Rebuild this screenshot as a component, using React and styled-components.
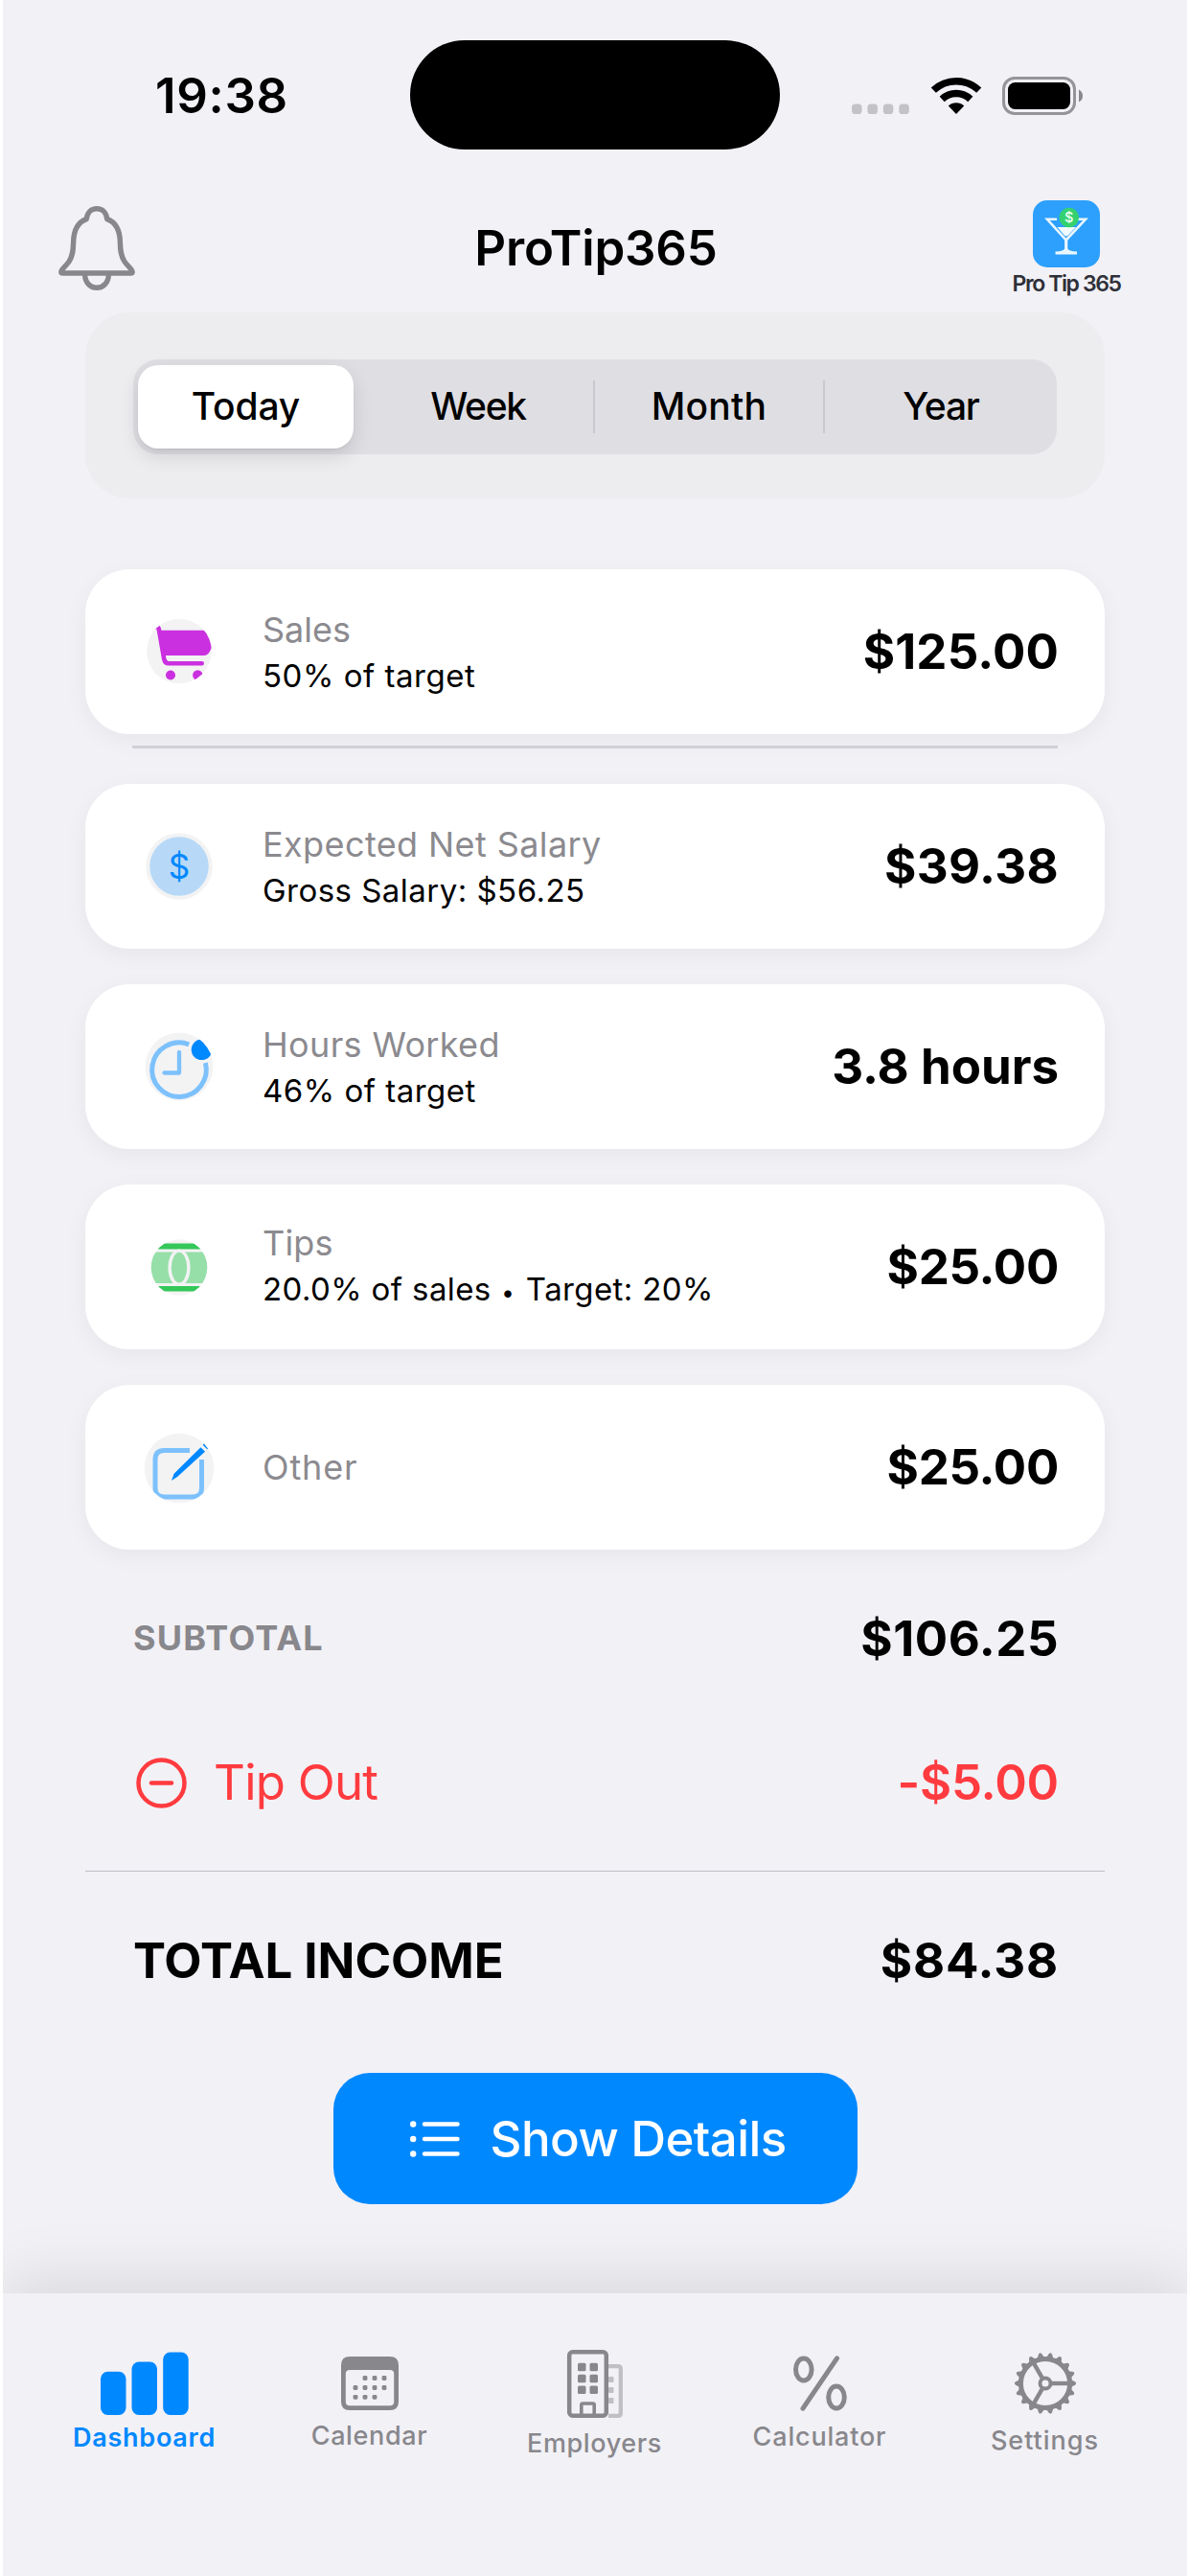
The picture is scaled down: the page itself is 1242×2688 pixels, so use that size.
import React from 'react';
import styled, { createGlobalStyle } from 'styled-components';

const BLUE = '#0088ff';
const GREY = '#88878c';

const GlobalStyle = createGlobalStyle`
  * { box-sizing: border-box; }
  body {
    margin: 0;
    background: #ffffff;
    font-family: Inter, "Liberation Sans", sans-serif;
    color: #000000;
  }
  svg { display: block; flex: none; overflow: visible; }
`;

const Screen = styled.div`
  width: 1236px;
  height: 2688px;
  margin: 0 3px;
  background: #f2f1f6;
  display: flex;
  flex-direction: column;
  overflow: hidden;
`;

const Text = styled.span`
  font-size: ${(p) => p.$size || 51}px;
  font-weight: ${(p) => p.$weight || 400};
  line-height: ${(p) => (p.$line ? `${p.$line}px` : '1.2')};
  letter-spacing: ${(p) => p.$track || 0}px;
  color: ${(p) => p.$color || '#000000'};
  white-space: nowrap;
`;

/* ---------- Status bar ---------- */

const StatusBar = styled.div`
  height: 200px;
  display: grid;
  grid-template-columns: 425px 386px 1fr;
  align-items: center;
`;

const Clock = styled(Text)`
  padding-left: 159px;
`;

const Island = styled.div`
  height: 114px;
  margin-bottom: 2px;
  border-radius: 57px;
  background: #000000;
`;

const StatusIcons = styled.div`
  display: flex;
  align-items: center;
  gap: 22.5px;
  padding-left: 75px;
`;

/* ---------- Header ---------- */

const Header = styled.header`
  height: 117px;
  padding: 0 69px 0 58px;
  display: grid;
  grid-template-columns: 1fr auto 1fr;
  align-items: center;
`;

const Title = styled(Text)`
  margin: 0;
  padding-left: 13px;
`;

const Brand = styled.div`
  justify-self: end;
  width: 114px;
  display: flex;
  flex-direction: column;
  align-items: center;
  gap: 5px;
`;

/* ---------- Period picker ---------- */

const PickerPanel = styled.div`
  margin: 9px 86px 0;
  padding: 49px 50px 46px;
  border-radius: 46px;
  background: #ededef;
`;

const Picker = styled.div`
  height: 99px;
  border-radius: 26px;
  background: #dfdee3;
  display: grid;
  grid-template-columns: 240px 240px 240px 1fr;
  align-items: center;
`;

const Segment = styled.div`
  height: ${(p) => (p.$active ? 87 : 55)}px;
  margin: ${(p) => (p.$active ? '0 10px 0 5px' : '0')};
  display: flex;
  align-items: center;
  justify-content: center;
  border-radius: ${(p) => (p.$active ? 21 : 0)}px;
  background: ${(p) => (p.$active ? '#ffffff' : 'transparent')};
  box-shadow: ${(p) =>
    p.$active ? '0 8px 20px rgba(0,0,0,0.12), 0 2px 2px rgba(0,0,0,0.04)' : 'none'};
  border-left: ${(p) => (p.$divided ? '2px solid #c9c8ce' : 'none')};
`;

/* ---------- Cards ---------- */

const Cards = styled.section`
  margin: 74px 86px 0;
  display: flex;
  flex-direction: column;
  gap: 37px;
`;

const CardGroup = styled.div`
  display: flex;
  flex-direction: column;
  gap: 12px;
`;

const Card = styled.article`
  height: 172px;
  padding: 0 48px 0 62px;
  border-radius: 46px;
  background: #ffffff;
  box-shadow: 0 6px 24px rgba(0, 0, 0, 0.05);
  display: flex;
  align-items: center;
`;

const CardBody = styled.div`
  flex: 1;
  margin-left: 51px;
  display: flex;
  flex-direction: column;
`;

const Bullet = styled.span`
  margin: 0 2px 0 1px;
  font-size: 24px;
`;

const CardRule = styled.div`
  height: 3px;
  margin: 0 49px;
  background: #d1d0d6;
`;

/* ---------- Totals ---------- */

const Totals = styled.section`
  margin: 43px 86px 0;
  display: flex;
  flex-direction: column;
`;

const TotalRow = styled.div`
  height: 100px;
  padding: 0 48px 0 50px;
  margin-top: ${(p) => p.$top || 0}px;
  display: flex;
  align-items: center;
  justify-content: space-between;
`;

const TipLabel = styled.div`
  display: flex;
  align-items: center;
  gap: 28px;
  padding-left: 3px;
`;

const Rule = styled.div`
  height: 1px;
  margin-top: 42px;
  background: #bfbec4;
`;

const DetailsButton = styled.button`
  align-self: center;
  width: 547px;
  height: 137px;
  margin-top: 67px;
  padding: 0 0 0 80px;
  border: 0;
  border-radius: 38px;
  background: ${BLUE};
  font-family: inherit;
  display: flex;
  align-items: center;
  gap: 32px;
`;

/* ---------- Tab bar ---------- */

const TabBar = styled.nav`
  height: 295px;
  margin-top: auto;
  padding: 0 30px;
  background: #f2f1f6;
  box-shadow: 0 -15px 60px rgba(0, 0, 0, 0.1);
  display: grid;
  grid-template-columns: repeat(5, 235px);
`;

const Tab = styled.div`
  display: flex;
  flex-direction: column;
  align-items: center;
  gap: 10px;
  padding-top: ${(p) => 94 - p.$iconHeight / 2}px;
`;

/* ---------- Icons ---------- */

const SignalDots = () => (
  <svg width="60" height="40" fill="#c3c2c7">
    {[0, 16.4, 32.8, 49.3].map((x) => (
      <rect key={x} x={x} y="28.5" width="10.5" height="10.5" rx="3.6" />
    ))}
  </svg>
);

const Wifi = () => (
  <svg width="52" height="38" viewBox="0 0 52 38" fill="none" stroke="#000" strokeWidth="7.4">
    <path d="M2.3 13.2A34.3 34.3 0 0 1 49.7 13.2" />
    <path d="M11.2 22.5A21.4 21.4 0 0 1 40.8 22.5" />
    <path d="M26 38L17.8 29.6A12 12 0 0 1 34.2 29.6Z" fill="#000" stroke="none" />
  </svg>
);

const Battery = () => (
  <svg width="85" height="40" viewBox="0 0 85 40">
    <rect x="1.5" y="1.5" width="74" height="37" rx="11.5" fill="none" stroke="#959499" strokeWidth="3" />
    <rect x="6" y="6" width="65" height="28" rx="7.5" fill="#000" />
    <path d="M80 13.5Q84 15.5 84 20T80 26.5Z" fill="#88878c" />
  </svg>
);

const Bell = () => (
  <svg width="80" height="88" viewBox="0 0 80 88" fill="none" stroke={GREY} strokeWidth="5.4" strokeLinejoin="round">
    <path d="M29.3 13.6C30 6.6 34 2.8 40 2.8S50 6.6 50.7 13.6C60.5 17 64.2 27 64.4 38C64.6 46 65 52 69 58C72.5 63 77.2 66 77.2 69Q77.2 70 75.5 70H4.5Q2.8 70 2.8 69C2.8 66 7.5 63 11 58C15 52 15.4 46 15.6 38C15.8 27 19.5 17 29.3 13.6Z" />
    <path d="M27.6 71C27.6 79.5 33 85.3 40 85.3S52.4 79.5 52.4 71" />
  </svg>
);

const BrandMark = () => (
  <svg width="70" height="70" viewBox="0 0 70 70">
    <rect width="70" height="70" rx="15" fill="#2ca0fc" />
    <g fill="none" stroke="#eaf6ff" strokeWidth="2.6">
      <path d="M25 19.8H15L34.7 41.5L55 19.8H46" />
      <path d="M34.7 41V53" strokeWidth="3.2" />
    </g>
    <path d="M33 50.5H36.5Q37 53 46 53.6V56.6H23.5V53.6Q32.5 53 33 50.5Z" fill="#eaf6ff" />
    <path d="M25.5 28H45L36.5 36.8Q34.8 38 33.1 36.8Z" fill="#f2faff" />
    <circle cx="37.8" cy="18" r="10.3" fill="#34d170" />
    <text x="37.8" y="23.2" textAnchor="middle" fontSize="14.5" fontWeight="500" fill="#f0fff5">$</text>
  </svg>
);

const Disc = ({ r, cy = 36, id, children }) => (
  <svg width="72" height="72" viewBox="0 0 72 72">
    <clipPath id={id}>
      <circle cx="36" cy={cy} r={r} />
    </clipPath>
    <circle cx="36" cy={cy} r={r} fill="#f3f3f4" />
    <g clipPath={`url(#${id})`}>{children}</g>
  </svg>
);

const CartIcon = () => (
  <Disc id="disc-cart" r={33.8} cy={35.5}>
    <g fill="#cb30e0">
      <path d="M16 13.8H80L67.5 36.5Q65.5 39.9 62 39.9H20Z" />
      <circle cx="27" cy="60.5" r="5" />
      <circle cx="55.3" cy="60.5" r="5.2" />
    </g>
    <path d="M10 10.3H12.5Q14.4 10.3 14.8 12.5L20.2 43.5Q21 48.3 25 48.3H59.7" fill="none" stroke="#cb30e0" strokeWidth="4.6" strokeLinecap="round" />
  </Disc>
);

const SalaryIcon = () => (
  <Disc id="disc-salary" r={34.8}>
    <circle cx="36" cy="36" r="30.8" fill="#b7d9f7" />
    <text x="36" y="48.7" textAnchor="middle" fontSize="35" fontWeight="400" fill={BLUE}>$</text>
  </Disc>
);

const HoursIcon = () => (
  <Disc id="disc-hours" r={35.5}>
    <g fill="none" stroke="#7dc1fc" strokeWidth="5">
      <path d="M46.2 12.8A28.3 28.3 0 1 0 63.4 32.2" />
      <path d="M36 21V42.5H20.5" strokeWidth="4.3" strokeLinecap="round" strokeLinejoin="round" />
    </g>
    <circle cx="59.5" cy="18.3" r="10.8" fill={BLUE} />
  </Disc>
);

const TipsIcon = () => (
  <Disc id="disc-tips" r={29.3} cy={36.5}>
    <rect x="0" y="11.5" width="72" height="6" fill="#34c759" />
    <rect x="0" y="56" width="72" height="5.5" fill="#34c759" />
    <rect x="0" y="20.5" width="72" height="32.5" fill="#96dfa8" />
    <ellipse cx="36" cy="36.7" rx="9.9" ry="17.6" fill="#96dfa8" stroke="#f3f3f4" strokeWidth="3.4" />
  </Disc>
);

const OtherIcon = () => (
  <Disc id="disc-other" r={36.3} cy={37}>
    <path d="M47 18.5H20.5Q11 18.5 11 28V57.5Q11 67 20.5 67H50Q59.5 67 59.5 57.5V28" fill="none" stroke="#7dc1fc" strokeWidth="5" />
    <path d="M67 10L36 41" stroke="#f3f3f4" strokeWidth="12" />
    <path d="M58.5 15.2L63 19.7L34.4 45.7L28 50L30.6 42.7Z" fill={BLUE} />
    <path d="M60.7 12.8L65.2 17.2L70 13L65 8Z" fill={BLUE} />
  </Disc>
);

const MinusCircle = () => (
  <svg width="53" height="53" viewBox="0 0 53 53" fill="none" stroke="#ff3b3f" strokeWidth="4.5" strokeLinecap="round">
    <circle cx="26.5" cy="26.5" r="24" />
    <path d="M16 26.5H37" />
  </svg>
);

const ListIcon = () => (
  <svg width="52" height="38" viewBox="0 0 52 38" stroke="#fff" strokeWidth="4.4" strokeLinecap="round" fill="#fff">
    {[3.5, 19, 34.5].map((y) => (
      <React.Fragment key={y}>
        <circle cx="3.2" cy={y} r="3.2" stroke="none" />
        <path d={`M15 ${y}H49.5`} />
      </React.Fragment>
    ))}
  </svg>
);

const BarsIcon = () => (
  <svg width="92" height="60" viewBox="0 0 92 60" fill={BLUE}>
    <rect x="0" y="17.7" width="26.5" height="45.3" rx="7.5" />
    <rect x="32.5" y="7.5" width="26.5" height="55.5" rx="7.5" />
    <rect x="65.2" y="-2.5" width="26.5" height="65.5" rx="7.5" />
  </svg>
);

const CalendarIcon = () => (
  <svg width="60" height="56" viewBox="0 0 60 56">
    <path fillRule="evenodd" fill={GREY} d="M9 0H51Q60 0 60 9V47Q60 56 51 56H9Q0 56 0 47V9Q0 0 9 0ZM9 14Q4.8 14 4.8 18V47Q4.8 51.3 9 51.3H51Q55.2 51.3 55.2 47V18Q55.2 14 51 14Z" />
    <g fill={GREY}>
      {[
        [25, 22.5], [35, 22.5], [45, 22.5],
        [15, 32.5], [25, 32.5], [35, 32.5], [45, 32.5],
        [15, 42.3], [25, 42.3], [35, 42.3],
      ].map(([x, y]) => (
        <rect key={`${x}-${y}`} x={x - 2.4} y={y - 2.4} width="4.8" height="4.8" rx="1.4" />
      ))}
    </g>
  </svg>
);

const BuildingIcon = () => (
  <svg width="58" height="71" viewBox="0 0 58 71" fill="none">
    <path d="M43 17.2H53Q55.8 17.2 55.8 20V66Q55.8 68.8 53 68.8H43" stroke="#c0bfc4" strokeWidth="4.3" />
    <g fill="#c0bfc4">
      {[28, 39, 50].map((y) => (
        <rect key={y} x="43" y={y} width="5.5" height="6" rx="1" />
      ))}
    </g>
    <rect x="2.2" y="2.3" width="38.6" height="66.4" rx="3.5" stroke={GREY} strokeWidth="4.5" />
    <g fill={GREY}>
      {[13.7, 25.7, 37.4].map((y) =>
        [11, 23.5].map((x) => (
          <rect key={`${x}-${y}`} x={x} y={y} width="8.5" height="8.5" rx="1.5" />
        ))
      )}
    </g>
    <path d="M14.8 68V57.5Q14.8 56 16.3 56H26.7Q28.2 56 28.2 57.5V68" stroke={GREY} strokeWidth="3.6" />
  </svg>
);

const PercentIcon = () => (
  <svg width="56" height="58" viewBox="0 0 56 58" fill="none" stroke={GREY} strokeWidth="5" strokeLinecap="round">
    <ellipse cx="10.8" cy="14.5" rx="8.3" ry="11.5" />
    <ellipse cx="45" cy="43.5" rx="8.3" ry="11.5" />
    <path d="M45.5 2.8L10 55.2" />
  </svg>
);

const GearIcon = () => (
  <svg width="66" height="66" viewBox="-33 -33 66 66" fill="none" stroke={GREY}>
    <circle r="25.6" strokeWidth="5" />
    {Array.from({ length: 18 }, (_, i) => (
      <path key={i} d="M26 -4.2L31 -1.7Q33.2 0 31 1.7L26 4.2Z" fill={GREY} stroke="none" transform={`rotate(${i * 20})`} />
    ))}
    <circle r="5.5" strokeWidth="3.9" />
    {[0, 120, 240].map((a) => (
      <path key={a} d="M7 0H24" strokeWidth="4.4" transform={`rotate(${a})`} />
    ))}
  </svg>
);

/* ---------- Data ---------- */

const periods = [
  { label: 'Today', active: true, track: -0.15 },
  { label: 'Week', track: -1.3 },
  { label: 'Month', divided: true, track: 0.25 },
  { label: 'Year', divided: true, track: -1.2 },
];

const entries = [
  { icon: CartIcon, label: 'Sales', note: ['50% of target'], noteTrack: 0.53, amount: '$125.00', track: 0.15, ruled: true },
  { icon: SalaryIcon, label: 'Expected Net Salary', labelTrack: 0.4, note: ['Gross Salary: $56.25'], noteTrack: 0.47, amount: '$39.38', track: 0.35 },
  { icon: HoursIcon, label: 'Hours Worked', labelTrack: 0.35, note: ['46% of target'], noteTrack: 0.5, amount: '3.8 hours', track: 0 },
  { icon: TipsIcon, label: 'Tips', labelTrack: 0.2, note: ['20.0% of sales', 'Target: 20%'], noteTrack: 0.39, amount: '$25.00', track: -0.3 },
  { icon: OtherIcon, label: 'Other', labelTrack: 0.85, amount: '$25.00', track: -0.3 },
];

const tabs = [
  { icon: BarsIcon, height: 60, label: 'Dashboard', track: 0.76, active: true },
  { icon: CalendarIcon, height: 56, label: 'Calendar', track: 0.63 },
  { icon: BuildingIcon, height: 71, label: 'Employers', track: 0.6 },
  { icon: PercentIcon, height: 58, label: 'Calculator', track: 0.82 },
  { icon: GearIcon, height: 66, label: 'Settings', track: 1 },
];

const EntryCard = ({ icon: Icon, label, labelTrack, note, noteTrack, amount, track }) => (
  <Card>
    <Icon />
    <CardBody>
      <Text $size={36} $line={50} $track={labelTrack} $color="#8b8a8f">{label}</Text>
      {note && (
        <Text $size={33} $line={47} $track={noteTrack}>
          {note[0]}
          {note[1] && <> <Bullet>•</Bullet> {note[1]}</>}
        </Text>
      )}
    </CardBody>
    <Text $weight={700} $track={track}>{amount}</Text>
  </Card>
);

export default function App() {
  return (
    <>
      <GlobalStyle />
      <Screen>
        <StatusBar>
          <Clock $weight={600} $track={0.65}>19:38</Clock>
          <Island />
          <StatusIcons>
            <SignalDots />
            <Wifi />
            <Battery />
          </StatusIcons>
        </StatusBar>

        <Header>
          <Bell />
          <Title as="h1" $weight={600} $track={-0.19}>ProTip365</Title>
          <Brand>
            <BrandMark />
            <Text $size={23} $weight={600} $line={24} $track={-1.4} $color="#2e3038">Pro Tip 365</Text>
          </Brand>
        </Header>

        <PickerPanel>
          <Picker>
            {periods.map((p) => (
              <Segment key={p.label} $active={p.active} $divided={p.divided}>
                <Text $size={39} $weight={500} $track={p.track}>{p.label}</Text>
              </Segment>
            ))}
          </Picker>
        </PickerPanel>

        <Cards>
          {entries.map((e) =>
            e.ruled ? (
              <CardGroup key={e.label}>
                <EntryCard {...e} />
                <CardRule />
              </CardGroup>
            ) : (
              <EntryCard key={e.label} {...e} />
            )
          )}
        </Cards>

        <Totals>
          <TotalRow>
            <Text $size={36} $weight={700} $track={1.2} $color={GREY}>SUBTOTAL</Text>
            <Text $weight={700} $track={0.5}>$106.25</Text>
          </TotalRow>
          <TotalRow $top={50}>
            <TipLabel>
              <MinusCircle />
              <Text $track={-0.78} $color="#ff3b3f">Tip Out</Text>
            </TipLabel>
            <Text $weight={600} $track={-0.24} $color="#ff3b3f">-$5.00</Text>
          </TotalRow>
          <Rule />
          <TotalRow $top={43}>
            <Text $weight={700} $track={-0.05}>TOTAL INCOME</Text>
            <Text $weight={700} $track={0.8}>$84.38</Text>
          </TotalRow>
          <DetailsButton>
            <ListIcon />
            <Text $weight={500} $track={-0.56} $color="#ffffff">Show Details</Text>
          </DetailsButton>
        </Totals>

        <TabBar>
          {tabs.map(({ icon: Icon, ...t }) => (
            <Tab key={t.label} $iconHeight={t.height}>
              <Icon />
              <Text $size={27} $line={34} $weight={t.active ? 600 : 500} $track={t.track} $color={t.active ? BLUE : GREY}>
                {t.label}
              </Text>
            </Tab>
          ))}
        </TabBar>
      </Screen>
    </>
  );
}
